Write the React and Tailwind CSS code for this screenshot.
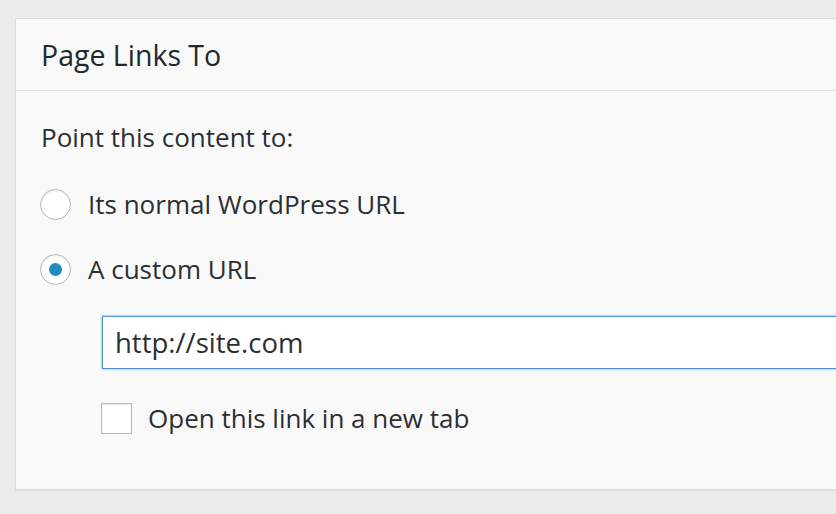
import React from 'react'

// metabox: Page Links To
function Radio({ checked }) {
    return (
        <span className="flex h-[31px] w-[31px] shrink-0 items-center justify-center rounded-full border border-[#b4b9be] bg-white shadow-[inset_0_1px_2px_rgba(0,0,0,0.1)]">
            {checked && <span className="h-[13px] w-[13px] rounded-full bg-[#1e8cbe]" />}
        </span>
    )
}

export default function App() {
    return (
        <div className="h-[514px] w-[836px] overflow-hidden bg-[#ececec] pl-[15px] pt-[18px] font-['Open_Sans',sans-serif] text-[#2b2f33]">
            <div className="h-[472px] w-[840px] border border-[#dcdcdc] bg-[#f9f9f9] shadow-[0_1px_1px_rgba(0,0,0,0.04)]">
                <div className="flex h-[72px] items-center border-b border-[#e3e3e3] pl-[25px] pt-[2px] text-[28.5px] text-[#23282d]">
                    Page Links To
                </div>
                <div className="flex flex-col pl-[24px] pt-[29px] text-[26px]">
                    <p className="h-[34px] pl-px leading-[34px]">Point this content to:</p>

                    <label className="mt-[33px] flex h-[34px] items-center gap-[17px]">
                        <Radio />
                        <span>Its normal WordPress URL</span>
                    </label>
                    <label className="mt-[31px] flex h-[34px] items-center gap-[17px]">
                        <Radio checked />
                        <span>A custom URL</span>
                    </label>

                    <div className="ml-[62px] mt-[30px] flex h-[53px] items-center border border-[#4f93cc] bg-white pl-[12px] text-[27.5px] shadow-[0_0_2px_rgba(30,140,190,0.8)]">
                        http://site.com
                    </div>

                    <label className="ml-[61px] mt-[32px] flex h-[34px] items-center gap-[16px]">
                        <span className="h-[31px] w-[31px] shrink-0 border border-[#b4b9be] bg-white shadow-[inset_0_1px_2px_rgba(0,0,0,0.1)]" />
                        <span>Open this link in a new tab</span>
                    </label>
                </div>
            </div>
        </div>
    )
}
